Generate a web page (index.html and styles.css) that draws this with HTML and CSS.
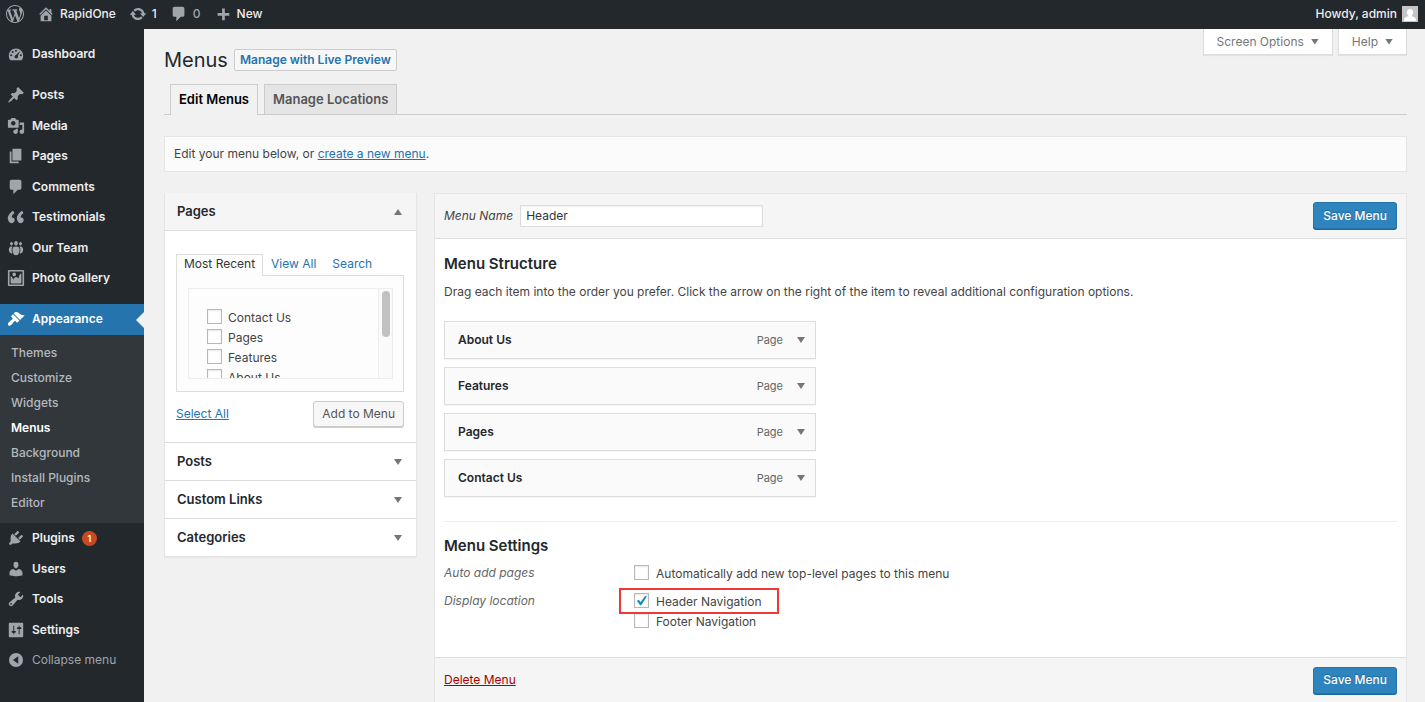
FILE: index.html
```html
<!DOCTYPE html>
<html lang="en">
<head>
<meta charset="utf-8">
<title>Menus - RapidOne</title>
<link rel="stylesheet" href="styles.css">
</head>
<body>
<header class="adminbar">
  <nav class="bar-group" aria-label="Toolbar">
    <a class="bar-link" href="#" aria-label="WordPress"><svg class="icon" viewBox="0 0 20 20"><path d="M20 10c0-5.51-4.49-10-10-10C4.48 0 0 4.49 0 10c0 5.52 4.48 10 10 10 5.51 0 10-4.48 10-10zM7.78 15.37L4.37 6.22c.55-.02 1.17-.08 1.17-.08.5-.06.44-1.13-.06-1.11 0 0-1.45.11-2.37.11-.18 0-.37 0-.58-.01C4.12 2.69 6.87 1.11 10 1.11c2.33 0 4.45.87 6.05 2.34-.68-.11-1.65.39-1.65 1.58 0 .74.45 1.36.9 2.1.35.61.55 1.36.55 2.46 0 1.49-1.4 5-1.4 5l-3.03-8.37c.54-.02.82-.17.82-.17.5-.05.44-1.25-.06-1.22 0 0-1.44.12-2.38.12-.87 0-2.33-.12-2.33-.12-.5-.03-.56 1.2-.06 1.22l.92.08 1.26 3.41zM17.41 10c.24-.64.74-1.87.43-4.25.7 1.29 1.05 2.71 1.05 4.25 0 3.29-1.73 6.24-4.4 7.78.97-2.59 1.94-5.2 2.92-7.78zM6.1 18.09C3.12 16.65 1.11 13.53 1.11 10c0-1.3.23-2.48.72-3.59C3.25 10.3 4.67 14.2 6.1 18.09zm4.03-6.63l2.58 6.98c-.86.29-1.76.45-2.71.45-.79 0-1.57-.11-2.29-.33.81-2.38 1.62-4.74 2.42-7.1z"/></svg></a>
    <a class="bar-link" href="#"><svg class="icon" viewBox="0 0 20 20"><path d="M16 8.5l1.53 1.53-1.06 1.06L10 4.6l-6.47 6.49-1.06-1.06L10 2.5l4 4v-2h2v4zm-6-2.46l6 5.99V18H4v-5.97zM12 17v-5H8v5h4z"/></svg>RapidOne</a>
    <a class="bar-link" href="#"><svg class="icon" viewBox="0 0 20 20"><path d="M10.2 3.28c3.53 0 6.43 2.61 6.92 6h2.08l-3.5 4-3.5-4h2.32c-.45-1.97-2.21-3.45-4.32-3.45-1.45 0-2.73.71-3.54 1.78L4.95 5.66C6.23 4.2 8.11 3.28 10.2 3.28zm-.4 13.44c-3.52 0-6.43-2.61-6.92-6H.8l3.5-4c1.17 1.33 2.33 2.67 3.5 4H5.48c.45 1.97 2.21 3.45 4.32 3.45 1.45 0 2.73-.71 3.54-1.78l1.71 1.95c-1.28 1.46-3.15 2.38-5.25 2.38z"/></svg>1</a>
    <a class="bar-link dim" href="#"><svg class="icon" viewBox="0 0 20 20"><path d="M5 2h9c1.1 0 2 .9 2 2v7c0 1.1-.9 2-2 2h-2l-5 5v-5H5c-1.1 0-2-.9-2-2V4c0-1.1.9-2 2-2z"/></svg>0</a>
    <a class="bar-link" href="#"><svg class="icon" viewBox="0 0 20 20"><path d="M9 4h3v5h5v3h-5v5H9v-5H4V9h5z"/></svg>New</a>
  </nav>
  <a class="bar-link account" href="#">Howdy, admin<svg class="avatar" viewBox="0 0 16 16"><rect width="16" height="16" fill="#c5c5c5"/><path fill="#fff" d="M8 3c2 0 3.200 1.400 3.200 3.200 0 1.400-.6 2.500-1.400 3.100v1c1.800.4 3.400 1.300 4 2.700v2H2.200v-2c.6-1.400 2.200-2.300 4-2.700v-1C5.400 8.700 4.800 7.600 4.800 6.200 4.800 4.400 6 3 8 3z"/></svg></a>
</header>
<div class="shell">
  <nav class="sidebar" aria-label="Main menu">
    <ul class="menu-group">
      <li><a href="#"><svg class="icon" viewBox="0 0 20 20"><path fill-rule="evenodd" d="M3.760 17h12.480c1.100-1.370 1.760-3.110 1.760-5 0-4.420-3.580-8-8-8s-8 3.580-8 8c0 1.890.66 3.630 1.760 5zM10 5.200a1.100 1.100 0 1 1 0 2.200 1.100 1.100 0 0 1 0-2.200zM6.300 6.700a1.100 1.100 0 1 1 0 2.200 1.100 1.100 0 0 1 0-2.200zM14.900 6.400l-3 5.700c.5.600.5 1.600-.1 2.200-.8.800-2.200.8-2.900 0-.8-.8-.7-2 0-2.700.3-.3.700-.4 1.100-.5zM4.600 10.400a1.100 1.100 0 1 1 0 2.200 1.100 1.100 0 0 1 0-2.200zM15.400 10.400a1.100 1.100 0 1 1 0 2.200 1.100 1.100 0 0 1 0-2.200z"/></svg>Dashboard</a></li>
    </ul>
    <ul class="menu-group">
      <li><a href="#"><svg class="icon" viewBox="0 0 20 20"><path d="M10.440 3.020l1.820-1.820 6.360 6.350-1.830 1.820c-1.050-.68-2.480-.57-3.410.36l-.75.75c-.92.93-1.040 2.350-.35 3.410l-1.830 1.820-2.410-2.410-2.800 2.790c-.42.42-3.380 2.710-3.800 2.290s1.860-3.390 2.280-3.810l2.790-2.790L4.100 9.360l1.830-1.820c1.050.69 2.480.57 3.400-.36l.75-.75c.93-.92 1.050-2.350.36-3.410z"/></svg>Posts</a></li>
      <li><a href="#"><svg class="icon" viewBox="0 0 20 20"><path d="M13 11V4c0-.55-.45-1-1-1h-1.670L9 1H5L3.670 3H2c-.55 0-1 .45-1 1v7c0 .55.45 1 1 1h10c.55 0 1-.45 1-1zM7 4.500c1.380 0 2.500 1.120 2.500 2.500S8.380 9.500 7 9.500 4.500 8.380 4.500 7 5.620 4.500 7 4.500zM14 6h5v10.500c0 1.380-1.120 2.500-2.500 2.500S14 17.880 14 16.500s1.120-2.500 2.500-2.500c.17 0 .34.02.5.05V9h-3V6zm-4 8.050V13h2v3.500c0 1.380-1.120 2.500-2.500 2.500S7 17.880 7 16.500 8.120 14 9.500 14c.17 0 .34.02.5.05z" fill-rule="evenodd"/></svg>Media</a></li>
      <li><a href="#"><svg class="icon" viewBox="0 0 20 20"><path d="M6 15V2h10v13H6zm-1 1h8v2H3V5h2v11z"/></svg>Pages</a></li>
      <li><a href="#"><svg class="icon" viewBox="0 0 20 20"><path d="M5 2h9c1.100 0 2 .9 2 2v7c0 1.100-.9 2-2 2h-2l-5 5v-5H5c-1.100 0-2-.9-2-2V4c0-1.100.9-2 2-2z"/></svg>Comments</a></li>
      <li><a href="#"><svg class="icon" viewBox="0 0 20 20"><path d="M8.490 13.220c0-.74-.2-1.380-.61-1.900-.62-.78-1.830-.88-2.530-.72-.29-1.650 1.110-3.750 2.920-4.650L6.880 3c-2.730 1.300-6.420 5.280-5.960 9.050C1.210 14.430 2.590 17 5.040 17c.85 0 1.860-.55 2.420-1.050s1.030-1.880 1.030-2.730zm10 0c0-.74-.2-1.380-.61-1.900-.63-.78-1.830-.88-2.530-.72-.29-1.650 1.110-3.750 2.920-4.650L16.880 3c-2.730 1.300-6.410 5.280-5.950 9.050.29 2.380 1.660 4.950 4.110 4.950.85 0 1.860-.55 2.420-1.050s1.030-1.880 1.030-2.730z"/></svg>Testimonials</a></li>
      <li><a href="#"><svg class="icon" viewBox="0 0 20 20"><ellipse cx="10" cy="4.800" rx="2" ry="2.500"/><ellipse cx="5" cy="5.300" rx="1.600" ry="2"/><ellipse cx="15" cy="5.300" rx="1.600" ry="2"/><path d="M6.600 9.500c1-.9 2.200-1.300 3.400-1.300s2.400.4 3.400 1.300c.9 1.800.7 5-.5 6.800-.7 1.100-1.700 1.700-2.900 1.700s-2.200-.6-2.900-1.700c-1.200-1.800-1.400-5-.5-6.800zM4.800 8.200c.5 0 .9.100 1.300.3-1.300 2.200-1.200 5.100-.1 7.300-.3.200-.7.200-1 .2-1.700 0-3-2-3-4.300 0-2 1.200-3.500 2.800-3.500zM15.200 8.200c-.5 0-.9.100-1.300.3 1.300 2.200 1.200 5.100.1 7.300.3.200.7.200 1 .2 1.700 0 3-2 3-4.300 0-2-1.200-3.500-2.800-3.500z"/></svg>Our Team</a></li>
      <li><a href="#"><svg class="icon" viewBox="0 0 20 20"><path fill-rule="evenodd" d="M2.250 1h15.500c.69 0 1.250.56 1.250 1.250v15.500c0 .69-.56 1.250-1.250 1.250H2.250C1.560 19 1 18.440 1 17.750V2.250C1 1.560 1.560 1 2.250 1zM17.200 17.200V2.800H2.800v14.400h14.400zM10 6c0-1.100-.9-2-2-2s-2 .9-2 2 .9 2 2 2 2-.9 2-2zm3 5s0-6 3-6v10c0 .55-.45 1-1 1H5c-.55 0-1-.45-1-1V8c2 0 3 4 3 4s1-3 3-3 3 2 3 2z"/></svg>Photo Gallery</a></li>
    </ul>
    <ul class="menu-group appearance">
      <li class="current"><a href="#"><svg class="icon" viewBox="0 0 20 20"><path d="M14.480 11.060L7.410 3.990l1.500-1.500c.5-.56 2.300-.47 3.510.32 1.210.8 1.430 1.280 2.910 2.100 1.180.64 2.450 1.260 4.450.85zm-.71.71L6.700 4.700 4.930 6.470c-.39.39-.39 1.020 0 1.410l1.060 1.060c.39.39.39 1.030 0 1.420-.6.6-1.430 1.110-2.210 1.690-.35.26-.7.53-1.010.84C1.430 14.230.4 16.080 1.400 17.070c.99 1 2.840-.03 4.180-1.360.31-.31.58-.66.85-1.020.57-.78 1.080-1.610 1.690-2.210.39-.39 1.020-.39 1.410 0l1.060 1.060c.39.39 1.020.39 1.410 0z"/></svg>Appearance</a></li>
    </ul>
    <ul class="submenu">
      <li><a href="#">Themes</a></li>
      <li><a href="#">Customize</a></li>
      <li><a href="#">Widgets</a></li>
      <li><a href="#" class="active">Menus</a></li>
      <li><a href="#">Background</a></li>
      <li><a href="#">Install Plugins</a></li>
      <li><a href="#">Editor</a></li>
    </ul>
    <ul class="menu-group">
      <li><a href="#"><svg class="icon" viewBox="0 0 20 20"><path d="M13.110 4.360L9.870 7.600 8 5.730l3.240-3.240c.35-.34 1.050-.2 1.560.32.52.51.66 1.210.31 1.550zm-8 1.770l.91-1.120 9.010 9.010-1.190.84c-.71.71-2.630 1.160-3.820 1.160H6.140L4.900 17.260c-.59.59-1.540.59-2.120 0-.59-.58-.59-1.530 0-2.120l1.240-1.240v-3.880c0-1.130.4-3.190 1.090-3.890zm7.260 3.970l3.240-3.240c.34-.35 1.040-.21 1.550.31.52.51.66 1.210.31 1.550l-3.240 3.250z"/></svg>Plugins<span class="count">1</span></a></li>
      <li><a href="#"><svg class="icon" viewBox="0 0 20 20"><path d="M10 9.250c-2.270 0-2.730-3.440-2.730-3.440C7 4.020 7.820 2 9.970 2c2.160 0 2.980 2.020 2.710 3.810 0 0-.41 3.440-2.680 3.440zm0 2.570L12.720 10c2.390 0 4.520 2.330 4.520 4.530v2.490s-3.650 1.130-7.240 1.130c-3.650 0-7.240-1.130-7.240-1.130v-2.490c0-2.250 1.940-4.480 4.470-4.480z"/></svg>Users</a></li>
      <li><a href="#"><svg class="icon" viewBox="0 0 20 20"><path fill-rule="evenodd" d="M16.680 9.770c-1.340 1.340-3.300 1.670-4.950.99l-5.410 6.520c-.99.99-2.590.99-3.580 0s-.99-2.590 0-3.570l6.520-5.420c-.68-1.650-.35-3.610.99-4.950 1.280-1.280 3.120-1.620 4.720-1.060l-2.890 2.890 2.820 2.820 2.860-2.870c.53 1.580.18 3.390-1.080 4.650zM3.810 16.210c.4.39 1.040.39 1.430 0 .4-.4.4-1.040 0-1.430-.39-.4-1.030-.4-1.430 0-.39.39-.39 1.030 0 1.430z"/></svg>Tools</a></li>
      <li><a href="#"><svg class="icon" viewBox="0 0 20 20"><path fill-rule="evenodd" d="M18 17V3c0-.55-.45-1-1-1H3c-.55 0-1 .45-1 1v14c0 .55.45 1 1 1h14c.55 0 1-.45 1-1zM8 11h1c.55 0 1 .45 1 1s-.45 1-1 1H8v1.500c0 .28-.22.5-.5.5s-.5-.22-.5-.5V13H6c-.55 0-1-.45-1-1s.45-1 1-1h1V5.500c0-.28.22-.5.5-.5s.5.22.5.5V11zm5-2h-1c-.55 0-1-.45-1-1s.45-1 1-1h1V5.500c0-.28.22-.5.5-.5s.5.22.5.5V7h1c.55 0 1 .45 1 1s-.45 1-1 1h-1v5.500c0 .28-.22.5-.5.5s-.5-.22-.5-.5V9z"/></svg>Settings</a></li>
      <li><button type="button" class="collapse"><svg class="icon" viewBox="0 0 20 20"><path fill-rule="evenodd" d="M10 2.200a7.800 7.800 0 1 1 0 15.600 7.800 7.800 0 0 1 0-15.600zM12.500 5.800L6.500 10l6 4.200z"/></svg>Collapse menu</button></li>
    </ul>
  </nav>
  <main class="content">
    <div class="top">
      <div class="heading">
        <h1>Menus</h1>
        <a class="preview" href="#">Manage with Live Preview</a>
      </div>
      <div class="screen-meta">
        <button type="button">Screen Options<span class="arrow"></span></button>
        <button type="button">Help<span class="arrow"></span></button>
      </div>
    </div>
    <nav class="tabs" aria-label="Menu views">
      <a class="tab selected" href="#">Edit Menus</a>
      <a class="tab" href="#">Manage Locations</a>
    </nav>
    <p class="notice">Edit your menu below, or <a href="#">create a new menu</a>.</p>
    <div class="frame">
      <section class="accordion">
        <h3 class="open"><button type="button">Pages<span class="arrow up"></span></button></h3>
        <div class="accordion-body">
          <div class="mini-tabs">
            <a class="on" href="#">Most Recent</a>
            <a href="#">View All</a>
            <a href="#">Search</a>
          </div>
          <div class="panel">
            <div class="list-box">
              <div class="list">
                <label><input type="checkbox">Contact Us</label>
                <label><input type="checkbox">Pages</label>
                <label><input type="checkbox">Features</label>
                <label><input type="checkbox">About Us</label>
              </div>
              <div class="track" aria-hidden="true"><div class="thumb"></div></div>
            </div>
          </div>
          <div class="actions">
            <a href="#">Select All</a>
            <button type="button" class="button">Add to Menu</button>
          </div>
        </div>
        <h3><button type="button">Posts<span class="arrow"></span></button></h3>
        <h3><button type="button">Custom Links<span class="arrow"></span></button></h3>
        <h3><button type="button">Categories<span class="arrow"></span></button></h3>
      </section>
      <form class="editor">
        <div class="editor-bar head">
          <label for="menu-name">Menu Name</label>
          <input id="menu-name" class="name" type="text" value="Header">
          <button type="button" class="primary">Save Menu</button>
        </div>
        <div class="editor-body">
          <h2>Menu Structure</h2>
          <p class="hint">Drag each item into the order you prefer. Click the arrow on the right of the item to reveal additional configuration options.</p>
          <ul class="items">
            <li><strong>About Us</strong><span>Page</span><button type="button" aria-label="Edit About Us"><span class="arrow"></span></button></li>
            <li><strong>Features</strong><span>Page</span><button type="button" aria-label="Edit Features"><span class="arrow"></span></button></li>
            <li><strong>Pages</strong><span>Page</span><button type="button" aria-label="Edit Pages"><span class="arrow"></span></button></li>
            <li><strong>Contact Us</strong><span>Page</span><button type="button" aria-label="Edit Contact Us"><span class="arrow"></span></button></li>
          </ul>
          <div class="settings">
            <h2>Menu Settings</h2>
            <div class="setting" role="group" aria-labelledby="auto-add">
              <span class="setting-name" id="auto-add">Auto add pages</span>
              <div class="choices"><label><input type="checkbox">Automatically add new top-level pages to this menu</label></div>
            </div>
            <div class="setting" role="group" aria-labelledby="location">
              <span class="setting-name" id="location">Display location</span>
              <div class="choices">
                <label class="marked"><input type="checkbox" checked>Header Navigation</label>
                <label><input type="checkbox">Footer Navigation</label>
              </div>
            </div>
          </div>
        </div>
        <div class="editor-bar foot">
          <a class="delete" href="#">Delete Menu</a>
          <button type="button" class="primary">Save Menu</button>
        </div>
      </form>
    </div>
  </main>
</div>
</body>
</html>
```

FILE: styles.css
```css
* { box-sizing: border-box; }
body {
  margin: 0;
  min-height: 100vh;
  display: flex;
  flex-direction: column;
  background: #f1f1f1;
  color: #444;
  font: 12px/20px Inter, "Liberation Sans", sans-serif;
}
h1, h2, h3, p, ul { margin: 0; padding: 0; }
ul { list-style: none; }
a { color: #2574ae; }
button { font: inherit; color: inherit; border: 0; background: none; padding: 0; cursor: pointer; }
.icon { width: 18px; height: 18px; flex: none; fill: #a0a5aa; }
.arrow {
  width: 8px;
  height: 6px;
  flex: none;
  background: #72777c;
  clip-path: polygon(0 0, 100% 0, 50% 100%);
}
.arrow.up { clip-path: polygon(50% 0, 100% 100%, 0 100%); }

/* Toolbar */
.adminbar {
  height: 29px;
  display: flex;
  justify-content: space-between;
  padding: 0 7px 0 6px;
  background: #23282d;
}
.bar-group { display: flex; gap: 13px; }
.bar-link {
  display: flex;
  align-items: center;
  gap: 5px;
  padding-bottom: 1px;
  color: #eee;
  font-weight: 500;
  text-decoration: none;
}
.bar-link.dim { color: #a0a5aa; }
.avatar { width: 16px; height: 16px; }

/* Side menu */
.shell { flex: 1; display: flex; }
.sidebar { width: 144px; flex: none; background: #23282d; padding-top: 10px; }
.menu-group a, .collapse {
  height: 31px;
  width: 100%;
  display: flex;
  align-items: center;
  gap: 7px;
  padding: 0 0 1px 7px;
  color: #eee;
  font-weight: 600;
  text-decoration: none;
}
.menu-group li:nth-child(even) a { height: 30px; }
.menu-group + .menu-group { margin-top: 10px; }
.collapse { color: #a0a5aa; font-weight: 400; }
.current { position: relative; background: #2574ae; }
.current a { color: #fff; }
.current .icon { fill: #fff; }
.current::after {
  content: "";
  position: absolute;
  right: 0;
  top: 8px;
  border: 8px solid transparent;
  border-left: 0;
  border-right-color: #f1f1f1;
}
.submenu { background: #32373c; padding: 5px 0 8px; }
.submenu a {
  display: block;
  padding: 0 11px;
  line-height: 25px;
  color: #b4b9be;
  font-weight: 500;
  text-decoration: none;
}
.submenu .active { color: #fff; font-weight: 600; }
.count {
  width: 15px;
  height: 15px;
  border-radius: 8px;
  background: #ca4a1f;
  color: #fff;
  font-size: 9px;
  font-weight: 600;
  line-height: 15px;
  text-align: center;
}

/* Page head */
.content { flex: 1; min-width: 0; padding: 0 18px 0 20px; }
.top { display: flex; justify-content: space-between; align-items: flex-start; height: 55px; }
.heading { display: flex; align-items: center; gap: 6px; padding-top: 20px; }
h1 { font-size: 20px; font-weight: 400; line-height: 22px; color: #23282d; }
.preview {
  padding: 0 5px;
  line-height: 20px;
  border: 1px solid #ccc;
  border-radius: 2px;
  background: #f7f7f7;
  color: #2574ae;
  font-weight: 600;
  text-decoration: none;
}
.screen-meta { display: flex; gap: 5px; }
.screen-meta button {
  height: 26px;
  display: flex;
  align-items: center;
  gap: 7px;
  padding: 0 13px;
  border: 1px solid #ddd;
  border-top: 0;
  background: #fff;
  color: #72777c;
  box-shadow: 0 1px 1px rgba(0, 0, 0, .06);
}
.tabs { display: flex; gap: 6px; padding-left: 6px; border-bottom: 1px solid #ccc; }
.tab {
  height: 30px;
  padding: 0 8px;
  line-height: 29px;
  border: 1px solid #ccc;
  border-bottom: 0;
  background: #e5e5e5;
  color: #555;
  font-size: 13px;
  font-weight: 600;
  text-decoration: none;
}
.tab.selected { height: 31px; margin-bottom: -1px; background: #f1f1f1; color: #000; }
.notice {
  margin-top: 21px;
  padding: 7px 9px;
  border: 1px solid #e5e5e5;
  background: #fbfbfb;
}
.frame { display: grid; grid-template-columns: 253px 1fr; gap: 17px; align-items: start; margin-top: 21px; }

/* Page picker */
.accordion { border: 1px solid #e5e5e5; border-top: 0; background: #fff; box-shadow: 0 1px 1px rgba(0, 0, 0, .04); }
h3 { font-size: 13px; font-weight: 600; color: #23282d; border-top: 1px solid #ddd; }
h3.open { border-top: 0; border-bottom: 1px solid #ddd; background: #f5f5f5; }
h3 button {
  width: 100%;
  height: 37px;
  display: flex;
  align-items: center;
  justify-content: space-between;
  padding: 0 14px 2px 12px;
  font-weight: 600;
}
h3 .arrow { margin-top: 3px; }
.accordion-body { padding: 23px 12px 15px 11px; }
.mini-tabs { display: flex; }
.mini-tabs a {
  height: 21px;
  padding: 0 7px;
  border: 1px solid transparent;
  border-bottom: 0;
  color: #2574ae;
  line-height: 18px;
  text-decoration: none;
}
.mini-tabs .on { height: 22px; margin-bottom: -1px; border-color: #ddd; background: #fdfdfd; color: #32373c; z-index: 1; }
.panel { padding: 12px 10px 12px 11px; border: 1px solid #ddd; background: #fdfdfd; }
.list-box { height: 91px; display: flex; border: 1px solid #eee; overflow: hidden; }
.list { flex: 1; padding: 18px; }
label:has(input[type="checkbox"]) { display: flex; align-items: flex-start; gap: 7px; height: 20px; line-height: 22px; }
.list label:has(input[type="checkbox"]) { gap: 6px; }
.track { width: 14px; border-left: 1px solid #eee; background: #fafafa; padding: 2px 3px; }
.thumb { width: 8px; height: 46px; border-radius: 4px; background: #c1c1c1; }
input[type="checkbox"] {
  appearance: none;
  flex: none;
  width: 15px;
  height: 15px;
  margin: 2px 0 0;
  display: grid;
  place-items: center;
  border: 1px solid #b4b9be;
  background: #fff;
  box-shadow: inset 0 1px 2px rgba(0, 0, 0, .1);
}
input[type="checkbox"]:checked::before {
  content: "";
  width: 11px;
  height: 10px;
  background: #1e8cbe;
  clip-path: polygon(8% 52%, 25% 42%, 42% 66%, 82% 4%, 100% 8%, 48% 98%, 36% 98%);
}
.actions { display: flex; justify-content: space-between; align-items: center; margin-top: 9px; }
.button {
  height: 26px;
  padding: 0 8px;
  border: 1px solid #ccc;
  border-radius: 3px;
  background: #f7f7f7;
  color: #555;
  box-shadow: 0 1px 0 #ccc;
}

/* Menu editor */
.editor { border: 1px solid #e5e5e5; background: #fff; }
.editor-bar { display: flex; align-items: center; height: 45px; padding: 0 9px 1px; background: #f5f5f5; }
.editor-bar.head { border-bottom: 1px solid #ddd; }
.editor-bar.foot { border-top: 1px solid #ddd; height: 46px; }
.editor-bar label { font-style: italic; }
.editor-bar .primary { margin-left: auto; }
.name {
  width: 243px;
  height: 22px;
  margin-left: 7px;
  padding: 0 5px;
  border: 1px solid #ddd;
  background: #fff;
  color: #32373c;
  font: inherit;
  box-shadow: inset 0 1px 2px rgba(0, 0, 0, .07);
}
.primary {
  height: 27px;
  padding: 0 9px;
  border: 1px solid #2473ab;
  border-radius: 3px;
  background: #2e85bd;
  box-shadow: 0 1px 0 #1f669a;
  color: #fff;
  font-weight: 500;
  text-shadow: 0 -1px 1px #1f669a;
}
.editor-body { padding: 14px 9px 18px; }
h2 { font-size: 15px; font-weight: 600; line-height: 22px; color: #23282d; }
.hint { margin-top: 7px; }
.items { width: 372px; display: grid; gap: 8px; margin-top: 19px; }
.items li {
  height: 38px;
  display: flex;
  align-items: center;
  padding: 0 10px 0 13px;
  border: 1px solid #ddd;
  background: #fafafa;
  box-shadow: 0 1px 1px rgba(0, 0, 0, .04);
}
.items strong { flex: 1; font-weight: 600; color: #23282d; }
.items span { color: #666; font-size: 11px; }
.items button { display: flex; margin-left: 14px; }
.settings { margin-top: 24px; padding-top: 13px; border-top: 1px solid #eee; }
.setting { display: grid; grid-template-columns: 190px 1fr; margin-bottom: 8px; }
.settings h2 { margin-bottom: 6px; }
.setting-name { font-style: italic; color: #666; }
.marked { position: relative; width: max-content; }
.marked::after {
  content: "";
  position: absolute;
  inset: -3px -18px -3px -15px;
  border: 2px solid #ee3a36;
}
.delete { color: #a00; }
```
